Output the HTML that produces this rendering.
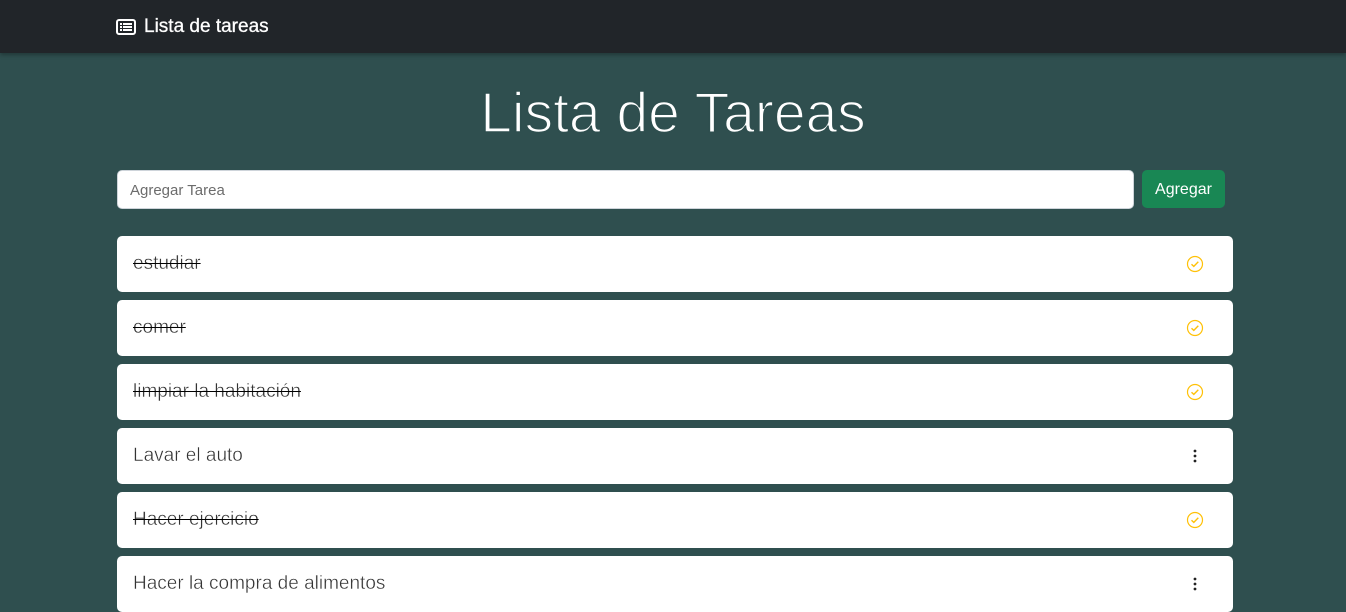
<!DOCTYPE html>
<html><head><meta charset="utf-8"><style>
*{box-sizing:border-box}
body{margin:0;width:1346px;height:605px;overflow:hidden;background:#2f4f4f;font-family:"Liberation Sans",sans-serif}
.nav{height:53px;background:#212529;position:relative;box-shadow:0 2px 4px rgba(0,0,0,.3)}
.brand{position:absolute;left:116px;top:16px;color:#fff;font-size:19px;display:flex;align-items:center;gap:8px;-webkit-text-stroke:0.3px #fff}
h1{margin:0;position:absolute;top:80px;left:0;width:1346px;text-align:center;color:#fff;font-weight:400;font-size:57px;-webkit-text-stroke:1.6px #2f4f4f}
.inp{position:absolute;left:117px;top:170px;width:1017px;height:39px;background:#fff;border:1px solid #ced4da;border-radius:5px;padding:11px 12px;font-size:15px;color:#6c6c6c}
.btn{position:absolute;left:1142px;top:170px;width:83px;height:38px;background:#198754;border-radius:5px;color:#fff;font-size:16px;text-align:center;line-height:40px}
.card{position:absolute;left:117px;width:1116px;height:56px;background:#fff;border-radius:5px;font-size:19px;color:#333;padding:0 16px;line-height:56px;-webkit-text-stroke:0.4px #fff}
.done{text-decoration:line-through;text-decoration-color:#000}
.ic{position:absolute;left:1069px;top:19px}
</style></head><body>
<div class="nav"><div class="brand"><svg width="20" height="16" viewBox="0 0 20 16"><rect x="1" y="1" width="18" height="14" rx="2" fill="none" stroke="#fff" stroke-width="2"/><g fill="#fff"><rect x="4" y="4" width="2" height="2"/><rect x="7" y="4" width="9" height="2"/><rect x="4" y="7" width="2" height="2"/><rect x="7" y="7" width="9" height="2"/><rect x="4" y="10" width="2" height="2"/><rect x="7" y="10" width="9" height="2"/></g></svg>Lista de tareas</div></div>
<h1>Lista de Tareas</h1>
<div class="inp">Agregar Tarea</div>
<div class="btn">Agregar</div>
<div class="card done" style="top:236px">estudiar<svg class="ic" width="18" height="18" viewBox="0 0 18 18"><circle cx="9" cy="9" r="7.5" fill="none" stroke="#ffc107" stroke-width="1.2"/><path d="M5.5 9.2l2.3 2.2 4.5-4.6" fill="none" stroke="#ffc107" stroke-width="1.4"/></svg></div>
<div class="card done" style="top:300px">comer<svg class="ic" width="18" height="18" viewBox="0 0 18 18"><circle cx="9" cy="9" r="7.5" fill="none" stroke="#ffc107" stroke-width="1.2"/><path d="M5.5 9.2l2.3 2.2 4.5-4.6" fill="none" stroke="#ffc107" stroke-width="1.4"/></svg></div>
<div class="card done" style="top:364px">limpiar la habitación<svg class="ic" width="18" height="18" viewBox="0 0 18 18"><circle cx="9" cy="9" r="7.5" fill="none" stroke="#ffc107" stroke-width="1.2"/><path d="M5.5 9.2l2.3 2.2 4.5-4.6" fill="none" stroke="#ffc107" stroke-width="1.4"/></svg></div>
<div class="card" style="top:428px">Lavar el auto<svg class="ic" width="18" height="18" viewBox="0 0 18 18"><g fill="#222"><circle cx="9" cy="4" r="1.4"/><circle cx="9" cy="9" r="1.4"/><circle cx="9" cy="14" r="1.4"/></g></svg></div>
<div class="card done" style="top:492px">Hacer ejercicio<svg class="ic" width="18" height="18" viewBox="0 0 18 18"><circle cx="9" cy="9" r="7.5" fill="none" stroke="#ffc107" stroke-width="1.2"/><path d="M5.5 9.2l2.3 2.2 4.5-4.6" fill="none" stroke="#ffc107" stroke-width="1.4"/></svg></div>
<div class="card" style="top:556px">Hacer la compra de alimentos<svg class="ic" width="18" height="18" viewBox="0 0 18 18"><g fill="#222"><circle cx="9" cy="4" r="1.4"/><circle cx="9" cy="9" r="1.4"/><circle cx="9" cy="14" r="1.4"/></g></svg></div>
</body></html>
